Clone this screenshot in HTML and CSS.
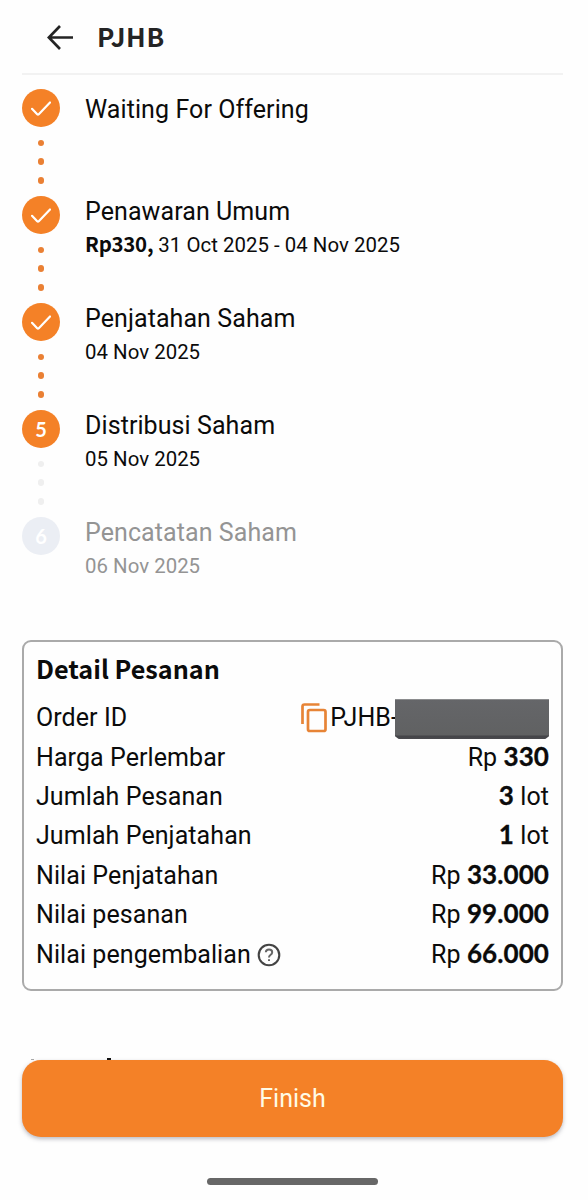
FILE: index.html
```html
<!DOCTYPE html>
<html lang="id">
<head>
<meta charset="utf-8">
<title>PJHB</title>
<link rel="stylesheet" href="styles.css">
</head>
<body>
<div class="screen">
  <header class="header">
    <svg class="back" viewBox="0 0 28 28"><path d="M26 13.5H2.5M13 2L1.8 13.5L13 25"/></svg>
    <h1 class="header-title">PJHB</h1>
  </header>

  <ol class="steps">
    <li class="step step-single">
      <div class="rail">
        <span class="badge"><svg class="check" viewBox="0 0 20 15"><path d="M1 7.8L6.2 13.2Q7 14 7.8 13.2L19 1.5"/></svg></span>
        <i class="dot"></i><i class="dot"></i><i class="dot"></i>
      </div>
      <div class="step-text"><p class="step-title">Waiting For Offering</p></div>
    </li>
    <li class="step">
      <div class="rail">
        <span class="badge"><svg class="check" viewBox="0 0 20 15"><path d="M1 7.8L6.2 13.2Q7 14 7.8 13.2L19 1.5"/></svg></span>
        <i class="dot"></i><i class="dot"></i><i class="dot"></i>
      </div>
      <div class="step-text"><p class="step-title">Penawaran Umum</p><p class="step-date"><b>Rp330,</b> 31 Oct 2025 - 04 Nov 2025</p></div>
    </li>
    <li class="step">
      <div class="rail">
        <span class="badge"><svg class="check" viewBox="0 0 20 15"><path d="M1 7.8L6.2 13.2Q7 14 7.8 13.2L19 1.5"/></svg></span>
        <i class="dot"></i><i class="dot"></i><i class="dot"></i>
      </div>
      <div class="step-text"><p class="step-title">Penjatahan Saham</p><p class="step-date">04 Nov 2025</p></div>
    </li>
    <li class="step step-current">
      <div class="rail">
        <span class="badge">5</span>
        <i class="dot"></i><i class="dot"></i><i class="dot"></i>
      </div>
      <div class="step-text"><p class="step-title">Distribusi Saham</p><p class="step-date">05 Nov 2025</p></div>
    </li>
    <li class="step step-next">
      <div class="rail"><span class="badge">6</span></div>
      <div class="step-text"><p class="step-title">Pencatatan Saham</p><p class="step-date">06 Nov 2025</p></div>
    </li>
  </ol>

  <section class="card">
    <h2 class="card-title">Detail Pesanan</h2>
    <div class="row">
      <span>Order ID</span>
      <span class="order">
        <svg class="copy" viewBox="0 0 26 30"><path d="M1.5 21V3.5Q1.5 1.5 3.5 1.5H18.500"/><rect x="7" y="7" width="17.500" height="21" rx="1.800"/></svg>
        <span class="order-id">PJHB-</span><span class="redacted"></span>
      </span>
    </div>
    <div class="row"><span>Harga Perlembar</span><span class="value">Rp <b>330</b></span></div>
    <div class="row"><span>Jumlah Pesanan</span><span class="value"><b>3</b> lot</span></div>
    <div class="row"><span>Jumlah Penjatahan</span><span class="value"><b>1</b> lot</span></div>
    <div class="row"><span>Nilai Penjatahan</span><span class="value">Rp <b>33.000</b></span></div>
    <div class="row"><span>Nilai pesanan</span><span class="value">Rp <b>99.000</b></span></div>
    <div class="row">
      <span class="with-help">Nilai pengembalian
        <svg class="help" viewBox="0 0 24 24"><circle cx="12" cy="12" r="10.300"/><path class="q" d="M8.800 9.300Q9 6.500 12 6.500Q15.200 6.500 15.200 9.200Q15.200 10.800 13.400 12Q12 13 12 14.400"/><path class="q" d="M12 16.200V18"/></svg>
      </span>
      <span class="value">Rp <b>66.000</b></span>
    </div>
  </section>

  <div class="peek"><i class="peek-a"></i><i class="peek-b"></i></div>
  <button class="finish">Finish</button>
  <div class="home-bar"></div>
</div>
</body>
</html>
```
FILE: styles.css
```css
* { box-sizing: border-box; }
body { margin: 0; background: #fefefe; color: #0b0b0b; font-family: Roboto, sans-serif; }
h1, h2, p, ol { margin: 0; padding: 0; }
.screen { width: 588px; height: 1200px; padding: 0 25px 0 22px; display: flex; flex-direction: column; overflow: hidden; }

.header { height: 75px; flex: none; border-bottom: 2px solid #f2f2f2; display: flex; align-items: center; padding: 0 0 0 25px; }
.back { width: 28px; height: 28px; margin-top: 3px; fill: none; stroke: #242424; stroke-width: 2.7; }
.header-title { margin: -2px 0 0 22px; font: 700 26px/38px "Noto Sans CJK SC", sans-serif; color: #242424; letter-spacing: 0.6px; }

.steps { list-style: none; margin-top: 14px; height: 551px; flex: none; }
.step { display: flex; height: 107px; gap: 25px; }
.rail { width: 38px; display: flex; flex-direction: column; align-items: center; }
.badge { width: 38px; height: 38px; flex: none; border-radius: 50%; background: #f48127; color: #fff; display: flex; align-items: center; justify-content: center; font: 700 20px/38px Lato, sans-serif; margin-bottom: 12.500px; }
.check { width: 20px; height: 15px; fill: none; stroke: #fff; stroke-width: 2.200; stroke-linecap: round; }
.dot { width: 6.400px; height: 6.400px; flex: none; border-radius: 50%; background: #ea8034; margin-bottom: 12.500px; }
.step-title { font-size: 25px; line-height: 30px; letter-spacing: 0.080px; padding-top: 0.500px; white-space: nowrap; }
.step-date { font-size: 20.400px; line-height: 26px; margin-top: 5.500px; letter-spacing: 0.030px; white-space: nowrap; }
.step-date b { font-family: "Noto Sans CJK SC", sans-serif; line-height: 20px; letter-spacing: -0.250px; }
.step-single .step-title { padding-top: 6px; }
.step-current .dot { background: #efefef; }
.step-next { color: #949494; }
.step-next .badge { background: #ebeef4; }

.card { flex: none; height: 351px; border: 2px solid #aaa; border-radius: 9px; padding: 6px 12px 0; }
.card-title { font: 700 25.200px/40px "Noto Sans CJK SC", sans-serif; margin-bottom: 10.500px; }
.row { height: 39.400px; display: flex; justify-content: space-between; align-items: center; font-size: 25px; line-height: 30px; letter-spacing: 0.080px; white-space: nowrap; }
.value b { font-family: Lato, sans-serif; font-size: 26px; line-height: 20px; -webkit-text-stroke: 0.300px #0b0b0b; }
.order { display: flex; align-items: center; }
.copy { width: 26px; height: 30px; margin-right: 3px; fill: none; stroke: #e78436; stroke-width: 2.700; }
.redacted { position: relative; width: 154px; height: 40px; margin: 2px 0 0 -3px; background: linear-gradient(#656669 0, #606162 36px, #444448 37px, #49494d 40px); clip-path: polygon(0 0, 100% 0, 100% 37px, 150px 100%, 4px 100%, 0 37px); }
.with-help { display: flex; align-items: center; gap: 6px; }
.help { width: 24px; height: 24px; fill: none; stroke: #444; stroke-width: 2.100; }
.q { stroke: #666; stroke-width: 2; }

.peek { height: 2px; margin-top: 67px; flex: none; display: flex; align-items: flex-end; }
.peek-a { width: 3px; height: 1px; margin-left: 9px; background: #aaa; }
.peek-b { width: 4px; height: 2px; margin-left: 73px; background: #111; }
.finish { height: 77px; flex: none; border: 0; border-radius: 19px; background: #f48127; color: #fffbe6; font: 400 25px/30px Roboto, sans-serif; box-shadow: 0 2px 4px rgba(60, 60, 80, 0.35); }
.home-bar { width: 171px; height: 7px; flex: none; margin: 41px 0 0 185px; border-radius: 4px; background: #676767; }
```
